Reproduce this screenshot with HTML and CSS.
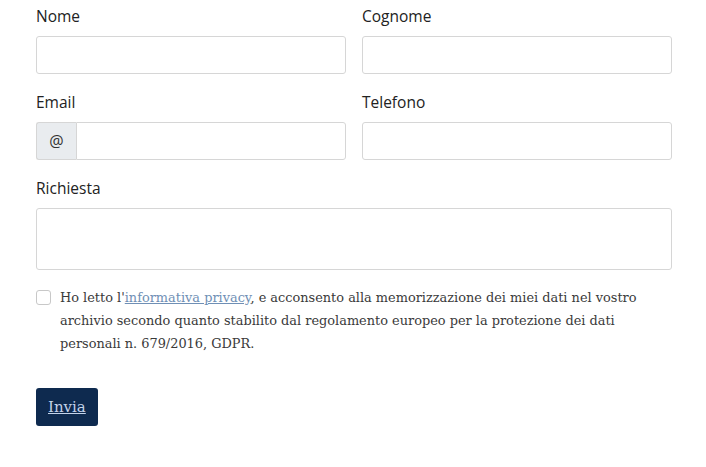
FILE: index.html
```html
<!DOCTYPE html>
<html lang="it">
<head>
  <meta charset="UTF-8">
  <meta name="viewport" content="width=device-width, initial-scale=1.0">
  <title>Contatti</title>
  <link rel="stylesheet" href="styles.css">
</head>
<body>

  <form class="contact-form">
    <div class="row">
      <div class="field">
        <label for="nome">Nome</label>
        <input type="text" id="nome">
      </div>
      <div class="field">
        <label for="cognome">Cognome</label>
        <input type="text" id="cognome">
      </div>
    </div>

    <div class="row">
      <div class="field">
        <label for="email">Email</label>
        <div class="input-group">
          <span class="addon">@</span>
          <input type="email" id="email">
        </div>
      </div>
      <div class="field">
        <label for="telefono">Telefono</label>
        <input type="text" id="telefono">
      </div>
    </div>

    <div class="field">
      <label for="richiesta">Richiesta</label>
      <textarea id="richiesta"></textarea>
    </div>

    <div class="privacy">
      <input type="checkbox" id="privacy">
      <p>Ho letto l'<a href="#">informativa privacy</a>, e acconsento alla memorizzazione dei miei dati nel vostro archivio secondo quanto stabilito dal regolamento europeo per la protezione dei dati personali n. 679/2016, GDPR.</p>
    </div>

    <button type="submit"><span>Invia</span></button>
  </form>

</body>
</html>
```

FILE: styles.css
```css
body {
  margin: 0;
  padding: 4px 34px 0 36px;
  background-color: #fff;
  font-family: "DejaVu Serif", serif;
  color: #333;
}

.contact-form {
  width: 636px;
}

.row {
  display: flex;
  gap: 16px;
}

.row .field {
  flex: 1;
}

.field {
  margin-bottom: 16px;
}

label {
  display: block;
  font-family: "Open Sans", sans-serif;
  font-size: 15.5px;
  line-height: 24px;
  color: #222;
  margin-bottom: 8px;
}

input[type="text"],
input[type="email"],
textarea {
  display: block;
  box-sizing: border-box;
  width: 100%;
  height: 38px;
  border: 1px solid #d6d6d6;
  border-radius: 3px;
  padding: 6px 12px;
  font-size: 1rem;
  background-color: #fff;
}

textarea {
  height: 62px;
  resize: none;
}

.input-group {
  display: flex;
}

.addon {
  box-sizing: border-box;
  width: 40px;
  height: 38px;
  display: flex;
  align-items: center;
  justify-content: center;
  background-color: #e9ecef;
  border: 1px solid #d6d6d6;
  border-right: none;
  border-radius: 3px 0 0 3px;
  font-family: "Open Sans", sans-serif;
  font-size: 16px;
  color: #333;
}

.input-group input[type="email"] {
  flex: 1;
  border-radius: 0 3px 3px 0;
}

.privacy {
  display: flex;
  align-items: flex-start;
}

.privacy input[type="checkbox"] {
  appearance: none;
  width: 15px;
  height: 15px;
  margin: 4px 9px 0 0;
  border: 1px solid #c8c8c8;
  border-radius: 3px;
  background-color: #fff;
  flex-shrink: 0;
}

.privacy p {
  margin: 0;
  max-width: 600px;
  font-size: 12.9px;
  line-height: 23px;
  color: #3a3a3a;
}

.privacy a {
  color: #6f8fb5;
}

button {
  margin-top: 33px;
  height: 38px;
  padding: 0 12px;
  background-color: #0e2a4f;
  border: none;
  border-radius: 3px;
  font-family: "DejaVu Serif", serif;
  font-size: 15px;
  color: #c3d3ea;
  cursor: pointer;
}

button span {
  text-decoration: underline;
}
```
